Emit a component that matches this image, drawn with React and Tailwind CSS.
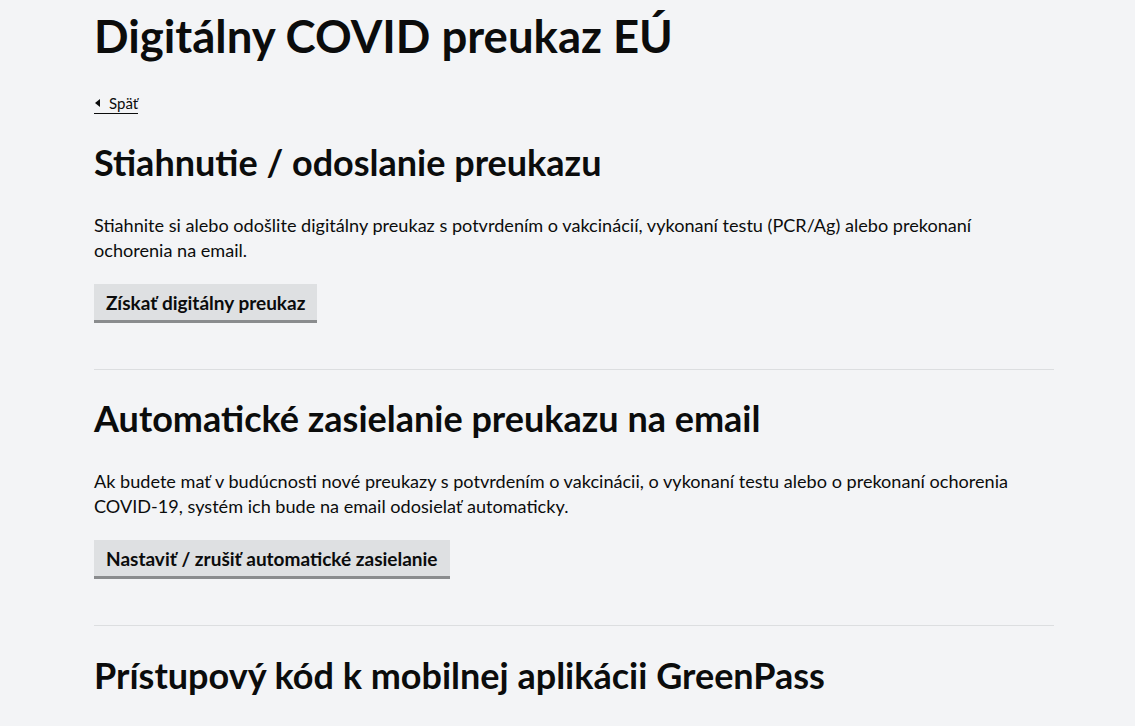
import React from 'react';

const sections = [
    {
        title: 'Stiahnutie / odoslanie preukazu',
        text: 'Stiahnite si alebo odošlite digitálny preukaz s potvrdením o vakcinácií, vykonaní testu (PCR/Ag) alebo prekonaní ochorenia na email.',
        button: 'Získať digitálny preukaz'
    },
    {
        title: 'Automatické zasielanie preukazu na email',
        text: 'Ak budete mať v budúcnosti nové preukazy s potvrdením o vakcinácii, o vykonaní testu alebo o prekonaní ochorenia COVID-19, systém ich bude na email odosielať automaticky.',
        button: 'Nastaviť / zrušiť automatické zasielanie'
    }
];

const App = () => {
    return (
        <div className="min-h-screen bg-[#f3f4f6] text-[#0b0c0c] font-['Lato','Liberation_Sans',sans-serif]">
            <div className="ml-[94px] w-[960px] pt-[11px]">
                <h1 className="text-[45.5px] leading-[50px] font-bold">Digitálny COVID preukaz EÚ</h1>

                <a href="#" className="mt-[33px] inline-flex items-center gap-[9px] text-[15px] leading-[18px] border-b border-[#0b0c0c] pb-[1px]">
                    <svg width="5" height="8" viewBox="0 0 5 8" className="ml-[1px]">
                        <path d="M5 0 L0 4 L5 8 Z" fill="#0b0c0c" />
                    </svg>
                    Späť
                </a>

                {sections.map((s, idx) => (
                    <div key={idx} className="pt-[28px]">
                        <h2 className="text-[36px] leading-[40px] font-bold">{s.title}</h2>
                        <p className="mt-[31px] text-[18.1px] leading-[25px] text-[#0b0c0c]">{s.text}</p>
                        <button className="mt-[21px] bg-[#dee0e2] border-b-[3px] border-[#8a8c8e] px-[12px] h-[39px] text-[19px] font-bold leading-[25px]">
                            {s.button}
                        </button>
                        <div className="mt-[46px] h-px bg-[#dcdee0]" />
                    </div>
                ))}

                <h2 className="pt-[29px] text-[36px] leading-[40px] font-bold">Prístupový kód k mobilnej aplikácii GreenPass</h2>
            </div>
        </div>
    );
};

export default App;
